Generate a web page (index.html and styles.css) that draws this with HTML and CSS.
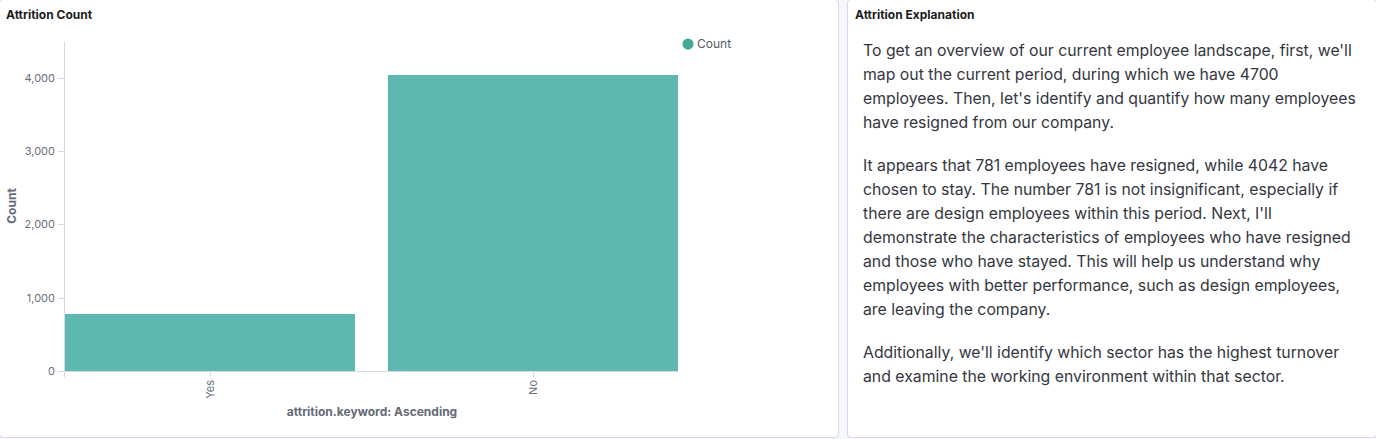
FILE: index.html
```html
<!DOCTYPE html>
<html>
<head>
<meta charset="utf-8">
<link rel="stylesheet" href="styles.css">
</head>
<body>
<div class="dashboard">
  <section class="panel panel-chart">
    <header class="panel-title">Attrition Count</header>
    <svg class="chart" width="837" height="407" viewBox="0 0 837 407">
      <g class="legend">
        <circle cx="688" cy="14" r="5.5" fill="#48a898"/>
        <text x="697" y="18" class="legend-text">Count</text>
      </g>
      <g class="axis" stroke="#d3dae6" stroke-width="1">
        <line x1="64.5" y1="12" x2="64.5" y2="347"/>
        <line x1="58" y1="48.5" x2="64" y2="48.5"/>
        <line x1="58" y1="121.5" x2="64" y2="121.5"/>
        <line x1="58" y1="194.5" x2="64" y2="194.5"/>
        <line x1="58" y1="268.5" x2="64" y2="268.5"/>
        <line x1="58" y1="341.5" x2="64" y2="341.5"/>
        <line x1="64" y1="341.5" x2="678" y2="341.5"/>
        <line x1="210.5" y1="342" x2="210.5" y2="347"/>
        <line x1="533.5" y1="342" x2="533.5" y2="347"/>
      </g>
      <g class="tick-labels">
        <text x="55" y="52" text-anchor="end">4,000</text>
        <text x="55" y="125" text-anchor="end">3,000</text>
        <text x="55" y="198" text-anchor="end">2,000</text>
        <text x="55" y="272" text-anchor="end">1,000</text>
        <text x="55" y="345" text-anchor="end">0</text>
        <text transform="translate(213.5 350) rotate(-90)" text-anchor="end">Yes</text>
        <text transform="translate(537 350) rotate(-90)" text-anchor="end">No</text>
      </g>
      <g class="bars" fill="#5fb8af">
        <rect x="65" y="284" width="290" height="57"/>
        <rect x="388" y="45" width="290" height="296"/>
      </g>
      <text class="axis-title" x="372" y="386" text-anchor="middle">attrition.keyword: Ascending</text>
      <text class="axis-title" transform="translate(16 176) rotate(-90)" text-anchor="middle">Count</text>
    </svg>
  </section>
  <section class="panel panel-text">
    <header class="panel-title">Attrition Explanation</header>
    <div class="markdown">
      <p>To get an overview of our current employee landscape, first, we'll map out the current period, during which we have 4700 employees. Then, let's identify and quantify how many employees have resigned from our company.</p>
      <p>It appears that 781 employees have resigned, while 4042 have chosen to stay. The number 781 is not insignificant, especially if there are design employees within this period. Next, I'll demonstrate the characteristics of employees who have resigned and those who have stayed. This will help us understand why employees with better performance, such as design employees, are leaving the company.</p>
      <p>Additionally, we'll identify which sector has the highest turnover and examine the working environment within that sector.</p>
    </div>
  </section>
</div>
</body>
</html>
```

FILE: styles.css
```css
html, body {
  margin: 0;
  padding: 0;
  background: #f7f8fc;
  overflow: hidden;
}

body {
  font-family: Inter, "Noto Sans", sans-serif;
  color: #343741;
}

.dashboard {
  display: flex;
  gap: 8px;
  margin: -1px -1px 0 -1px;
  height: 439px;
}

.panel {
  background: #fff;
  border: 1px solid #d3dae6;
  border-radius: 4px;
  box-shadow: 0 1px 2px rgba(0, 0, 0, 0.04);
  overflow: hidden;
}

.panel-chart {
  width: 838px;
  flex: none;
  display: flex;
  flex-direction: column;
}

.panel-text {
  flex: 1;
  display: flex;
  flex-direction: column;
}

.panel-title {
  font-size: 12px;
  font-weight: 700;
  line-height: 18px;
  color: #1a1c21;
  padding: 6px;
  height: 18px;
}

.panel-text .panel-title {
  padding-left: 7px;
}

.chart {
  display: block;
}

.legend-text {
  font-family: Inter, sans-serif;
  font-size: 12px;
  fill: #535966;
}

.tick-labels text {
  font-family: Inter, sans-serif;
  font-size: 11px;
  fill: #69707d;
}

.axis-title {
  font-family: Inter, sans-serif;
  font-size: 12px;
  font-weight: 700;
  fill: #646a77;
}

.markdown {
  padding: 9px 8px 0 15px;
  font-size: 15.8px;
  line-height: 24px;
  color: #343741;
}

.markdown p {
  margin: 0 0 19px 0;
}
```
